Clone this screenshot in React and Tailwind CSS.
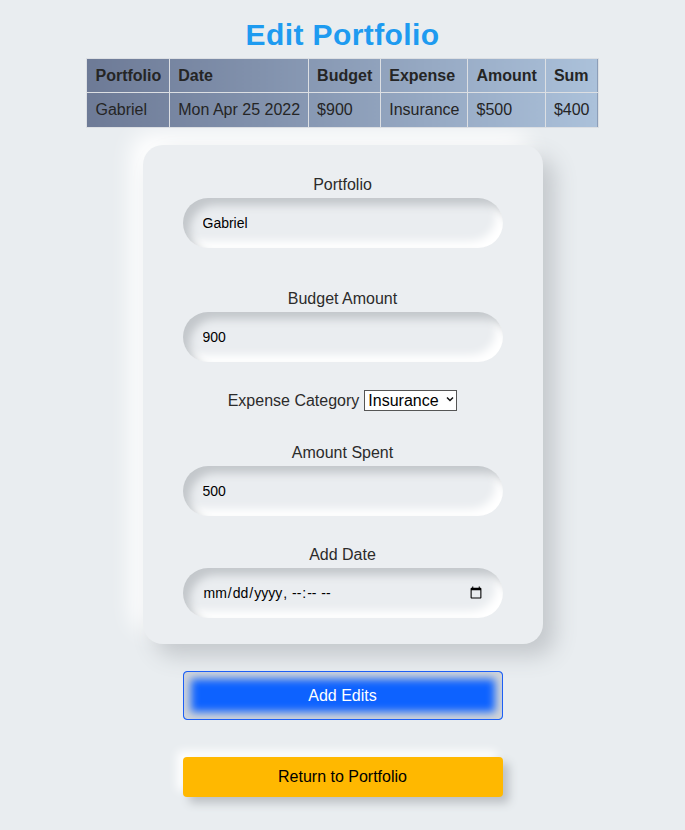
import React from "react";

const font = { fontFamily: '"Liberation Sans", Arial, Helvetica, sans-serif' };

function Field({ label, children, className = "" }) {
  return (
    <div className={"flex flex-col items-center " + className}>
      <label className="text-[16px] leading-[18px] text-[#2b2b2b]">{label}</label>
      <div className="mt-[4px]">{children}</div>
    </div>
  );
}

const inputCls =
  "w-[320px] h-[50px] rounded-full bg-[#eaedf0] pl-[20px] pr-[18px] text-[14px] text-black outline-none shadow-[inset_7px_7px_9px_#c3c7cb,inset_-7px_-7px_9px_#ffffff]";

export default function App() {
  return (
    <div className="min-h-[830px] w-full bg-[#e9edf0] pb-[34px]" style={font}>
      <h1 className="pt-[18px] text-center text-[30px] leading-[34px] font-bold tracking-[0.4px] text-[#1e9bf0]">
        Edit Portfolio
      </h1>
      <div className="mt-[6px] flex justify-center">
        <table className="border-collapse bg-gradient-to-r from-[#6d7a96] to-[#abc1da] text-[16px] text-[#252525]">
          <thead>
            <tr>
              {["Portfolio", "Date", "Budget", "Expense", "Amount", "Sum"].map((h) => (
                <th key={h} className="border border-[#dcdfe3] px-[8px] py-[8px] text-left font-bold leading-[17px]">
                  {h}
                </th>
              ))}
            </tr>
          </thead>
          <tbody>
            <tr>
              {["Gabriel", "Mon Apr 25 2022", "$900", "Insurance", "$500", "$400"].map((c) => (
                <td key={c} className="border border-[#dcdfe3] px-[8px] py-[8px] font-normal leading-[18px]">
                  {c}
                </td>
              ))}
            </tr>
          </tbody>
        </table>
      </div>

      <div className="mx-auto mt-[17px] flex w-[400px] flex-col items-center rounded-[20px] bg-[#ebeef1] pt-[31px] pb-[26px] shadow-[12px_12px_22px_#c4c8cc,-12px_-12px_22px_#ffffff]">
        <Field label="Portfolio">
          <input className={inputCls} defaultValue="Gabriel" style={font} />
        </Field>
        <Field label="Budget Amount" className="mt-[42px]">
          <input className={inputCls} defaultValue="900" style={font} />
        </Field>
        <div className="mt-[28px] flex h-[22px] items-center text-[16px] text-[#2b2b2b]">
          <span>Expense Category</span>
          <div className="relative ml-[5px]">
            <select
              className="h-[21px] w-[93px] appearance-none rounded-none border border-[#555] bg-white pl-[3px] text-[16px] leading-[19px] text-black outline-none"
              style={font}
              defaultValue="Insurance"
            >
              <option>Insurance</option>
              <option>Housing</option>
              <option>Food</option>
            </select>
            <svg
              className="pointer-events-none absolute right-[3px] top-[7px]"
              width="8"
              height="6"
              viewBox="0 0 8 6"
            >
              <path d="M1 1.5 L4 4.5 L7 1.5" fill="none" stroke="#111" strokeWidth="1.5" />
            </svg>
          </div>
        </div>
        <Field label="Amount Spent" className="mt-[32px]">
          <input className={inputCls} defaultValue="500" style={font} />
        </Field>
        <Field label="Add Date" className="mt-[30px]">
          <input type="datetime-local" className={inputCls} style={font} />
        </Field>
      </div>

      <div className="mt-[27px] flex flex-col items-center">
        <button className="h-[49px] w-[320px] rounded-[4px] border border-[#1d5ff5] bg-[#0d62ff] text-[16px] text-white shadow-[inset_0_0_9px_7px_#d2d5d8]">
          Add Edits
        </button>
        <button className="mt-[37px] h-[40px] w-[320px] rounded-[4px] bg-[#ffb800] text-[16px] text-black shadow-[6px_6px_10px_#bcc0c4,-6px_-6px_10px_#ffffff]">
          Return to Portfolio
        </button>
      </div>
    </div>
  );
}
